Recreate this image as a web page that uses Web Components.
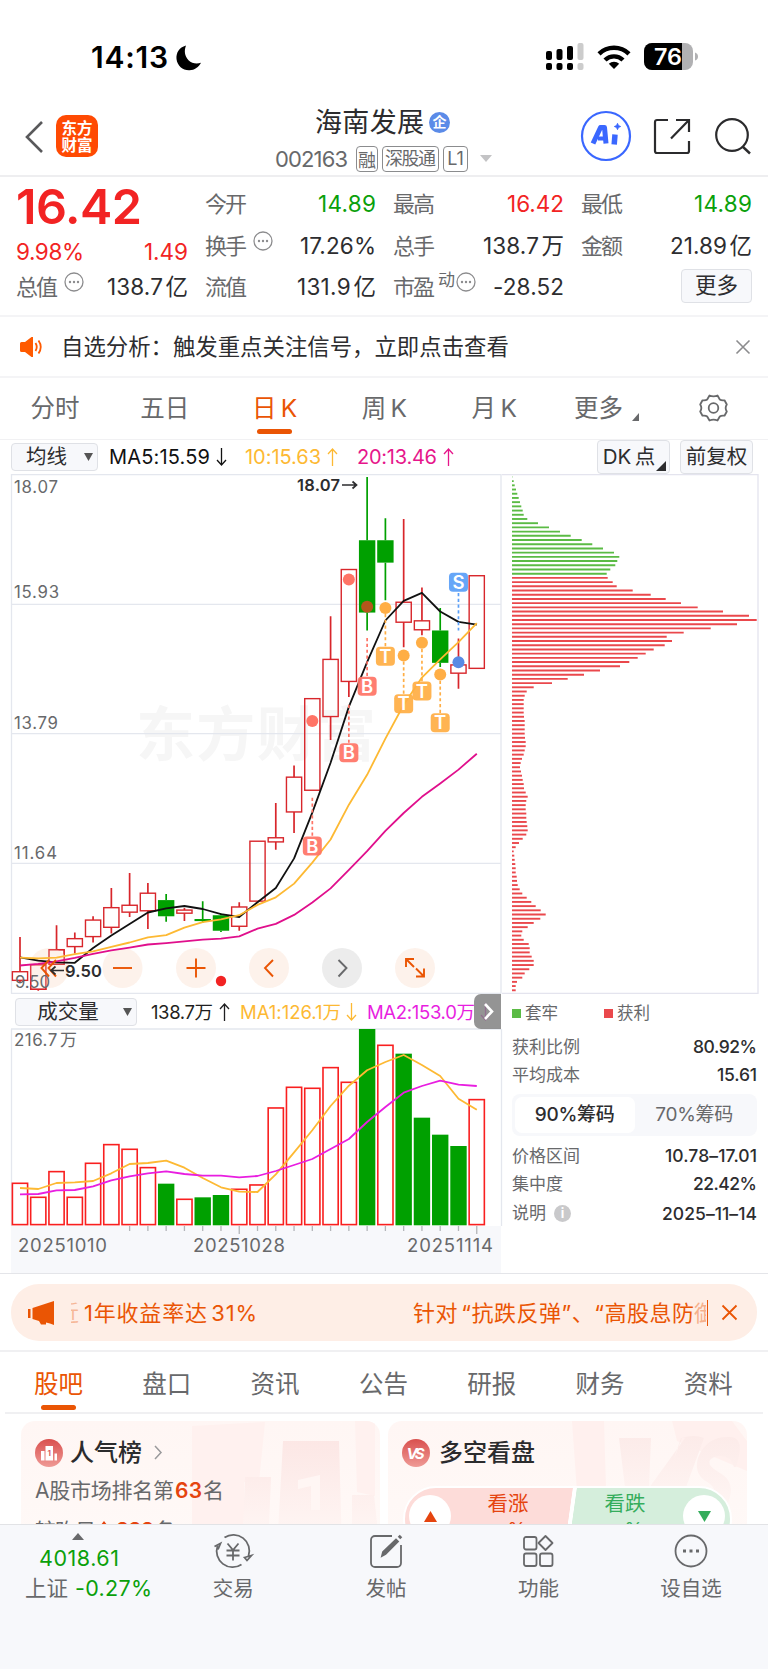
<!DOCTYPE html>
<html lang="zh-CN">
<head>
<meta charset="UTF-8">
<meta name="viewport" content="width=device-width, initial-scale=1.0">
<title>海南发展 002163</title>
<style>
    body {
        margin: 0;
        width: 768px;
        height: 1669px;
        overflow: hidden;
        background: #fff;
        color: #2d2d2f;
        font-family: Inter, "Noto Sans CJK SC", sans-serif;
        word-spacing: -2.500px;
        --orange: #ea5504;
        --red: #f22323;
        --green: #0aa00a;
        --gray: #68696b;
        --panel: #f7f8fb;
    }
    main {
        display: flex;
        flex-direction: column;
        height: 1669px;
    }
</style>
</head>
<body>
<main>
    <status-bar></status-bar>
    <stock-header></stock-header>
    <quote-board></quote-board>
    <notice-bar>自选分析：触发重点关注信号，立即点击查看</notice-bar>
    <period-tabs></period-tabs>
    <ma-toolbar></ma-toolbar>
    <chart-area></chart-area>
    <promo-banner></promo-banner>
    <section-tabs></section-tabs>
    <card-row></card-row>
    <bottom-bar></bottom-bar>
</main>

<script>
const define = (name, css, html) => {
    customElements.define(name, class extends HTMLElement {
        constructor() {
            super();
            this.attachShadow({mode: "open"});
        }

        connectedCallback() {
            this.shadowRoot.innerHTML = `<style>
                :host { display: block; box-sizing: border-box; flex: none; }
                * { box-sizing: border-box; }
                svg { display: block; flex: none; overflow: visible; }
                ${css}
            </style>${typeof html === "function" ? html(this) : html}`;
        }
    });
};

// one line of text, tracked so that it fills the width in "w"
class FitText extends HTMLElement {
    constructor() {
        super();
        this.attachShadow({mode: "open"});
    }

    connectedCallback() {
        this.shadowRoot.innerHTML = `
        <style>
            :host { display: inline-block; flex: none; white-space: nowrap; line-height: 1; }
            span { display: inline-block; }
        </style>
        <span><slot></slot></span>`;
        const width = Number(this.getAttribute("w"));
        const span = this.shadowRoot.querySelector("span");
        const count = this.textContent.length;
        if (width && count > 1) {
            const gap = (width - span.getBoundingClientRect().width) / (count - 1);
            span.style.letterSpacing = gap + "px";
            span.style.marginRight = -gap + "px";
        }
    }
}
customElements.define("fit-text", FitText);

define("more-dots", `
    :host { width: 20px; height: 20px; }
`, `<svg width="20" height="20" viewBox="0 0 20 20"><circle cx="10" cy="10" r="9" fill="none" stroke="#8c8c8e" stroke-width="1.300"/><g fill="#8c8c8e"><circle cx="6" cy="10" r="1.200"/><circle cx="10" cy="10" r="1.200"/><circle cx="14" cy="10" r="1.200"/></g></svg>`);

define("status-bar", `
    :host { display: flex; height: 100px; padding: 13px 70px 0 91px; align-items: center; color: #000; }
    .time { font-size: 30px; font-weight: 600; }
    .moon { margin: 2px auto 0 8px; }
    .signal { margin-right: 13px; }
    .battery { margin-left: 13px; }
`, `
    <fit-text class="time" w="77">14:13</fit-text>
    <svg class="moon" width="26" height="26" viewBox="0 0 26 26"><path d="M10 0.500C3 2.500 0 8 0.500 14c.8 7 6.500 11.500 13 11.200 5-.2 9.300-3 11.500-7.500-4 1.500-9 1-12.500-2.500C8.500 11 8 5.500 10 .5z"/></svg>
    <svg class="signal" width="38" height="27" viewBox="0 0 38 27"><g><rect x="0" y="8" width="6" height="9" rx="2"/><rect x="10.500" y="6" width="6" height="11" rx="2"/><rect x="21" y="3" width="6" height="14" rx="2"/><rect x="0" y="20" width="6" height="7" rx="2"/><rect x="10.500" y="20" width="6" height="7" rx="2"/><rect x="21" y="20" width="6" height="7" rx="2"/></g><g fill="#ccc"><rect x="31.500" y="0" width="6" height="17" rx="2"/><rect x="31.500" y="20" width="6" height="7" rx="2"/></g></svg>
    <svg width="34" height="24" viewBox="0 0 34 24"><g fill="none" stroke="#000" stroke-width="4.400"><path d="M2 8.800a21.500 21.500 0 0 1 30 0"/><path d="M8 15a13 13 0 0 1 18 0"/></g><path d="M17 24l-5.200-5.300a7.600 7.600 0 0 1 10.400 0z"/></svg>
    <svg class="battery" width="54" height="27" viewBox="0 0 54 27"><clipPath id="c"><rect width="49" height="27" rx="8"/></clipPath><g clip-path="url(#c)"><rect width="49" height="27" fill="#b1b1b3"/><rect width="38" height="27"/></g><path d="M51 9.500q3 1 3 4t-3 4z" fill="#b1b1b3"/><text x="10" y="22" fill="#fff" font-size="23" font-weight="600" textLength="28" lengthAdjust="spacingAndGlyphs">76</text></svg>
`);

define("stock-header", `
    :host { display: grid; grid-template-columns: 270px 1fr 190px; height: 77px; border-bottom: 2px solid #eeeef0; }
    .left, .right { display: flex; align-items: flex-start; }
    .left { padding: 15px 0 0 25px; }
    .left svg { margin-top: 6px; }
    .logo { margin-left: 13px; width: 42px; height: 42px; border-radius: 10px; background: #ff4a03; color: #fff; font: 700 15.500px/17px "Noto Sans CJK SC", sans-serif; text-align: center; padding-top: 4px; }
    .right { padding-left: 3px; padding-top: 11px; }
    .title { display: flex; align-items: center; height: 27px; margin: 9px 0 0 45px; font-size: 27px; color: #2b2b2d; }
    .qi { margin-left: 5px; margin-top: 0; width: 21px; height: 21px; border-radius: 50%; background: #5b8be8; color: #fff; font-size: 14px; font-weight: 700; line-height: 20px; text-align: center; }
    .code { display: flex; align-items: center; margin: 9px 0 0 5px; height: 27px; font-size: 22px; color: var(--gray); }
    .tag { height: 26px; border: 1.500px solid #8b8c8e; border-radius: 4px; margin-left: 4px; display: flex; align-items: center; justify-content: center; font-size: 18px; }
    .tag:nth-of-type(1) { margin-left: 8px; }
    .tri { margin-left: 12px; }
`, `
    <div class="left">
        <svg width="18" height="32" viewBox="0 0 18 32"><path d="M17 1L2 16l15 15" fill="none" stroke="#59595b" stroke-width="2.600"/></svg>
        <div class="logo">东方<br>财富</div>
    </div>
    <div>
        <div class="title"><fit-text w="109">海南发展</fit-text><span class="qi">企</span></div>
        <div class="code"><fit-text w="73">002163</fit-text>
            <div class="tag" style="width:22px">融</div><div class="tag" style="width:57px"><fit-text w="51">深股通</fit-text></div><div class="tag" style="width:25px">L1</div>
            <svg class="tri" width="12" height="7"><path d="M0 0h12l-6 7z" fill="#c3c3c5"/></svg>
        </div>
    </div>
    <div class="right">
        <svg width="50" height="50" viewBox="0 0 50 50"><circle cx="25" cy="25" r="24" fill="none" stroke="#3a67ff" stroke-width="2.200"/><g fill="#3a67ff" stroke="#3a67ff" stroke-linejoin="round"><path d="M12 32.500L19.500 16.500h4l1.500 16" fill="none" stroke-width="5"/><path d="M17 27.500h7" stroke-width="4"/><path d="M34 23.500l-.8 10" fill="none" stroke-width="5.500"/><path d="M36.500 12.300l1 2.200 2.200 1-2.200 1-1 2.200-1-2.200-2.200-1 2.200-1z" stroke-width=".8"/></g></svg>
        <svg style="margin:8px 0 0 23px" width="36" height="35" viewBox="0 0 36 35"><path d="M14 1H3a2 2 0 0 0-2 2v29a2 2 0 0 0 2 2h30a2 2 0 0 0 2-2V22M22 1h13v12M34.500 1.500L17 19.500" fill="none" stroke="#2b2b2d" stroke-width="2.200"/></svg>
        <svg style="margin:7px 0 0 25px" width="37" height="37" viewBox="0 0 37 37"><circle cx="17" cy="17" r="15.800" fill="none" stroke="#2b2b2d" stroke-width="2.200"/><path d="M27.500 28.500l7.500 7" stroke="#2b2b2d" stroke-width="2.400"/></svg>
    </div>
`);

define("quote-item", `
    :host { display: flex; align-items: center; height: 42px; font-size: 22.500px; line-height: 1; }
    .label { color: var(--gray); font-size: 22px; display: flex; }
    ::slotted(more-dots) { margin: -10px 0 0 6px; }
    .value { margin-left: auto; }
    :host([up]) .value { color: var(--red); }
    :host([down]) .value { color: var(--green); }
`, el => `
    <fit-text class="label" w="42">${el.getAttribute("label")}</fit-text>
    <slot></slot>
    <fit-text class="value" w="${el.getAttribute("w")}">${el.getAttribute("value")}</fit-text>
`);

define("quote-board", `
    :host { display: flex; gap: 17px; height: 140px; padding: 6px 16px 0 17px; border-bottom: 2px solid #f4f4f6; word-spacing: -4px; }
    .first { width: 171px; }
    .price { height: 48px; display: flex; align-items: center; color: var(--red); font-size: 48.500px; font-weight: 600; margin-left: -1px; }
    .change { height: 42px; display: flex; align-items: center; justify-content: space-between; color: var(--red); font-size: 22.500px; margin-left: -1px; }
    .first quote-item { height: 28px; margin-left: -1px; }
    .grid { display: grid; grid-template-columns: repeat(3, 171px); column-gap: 17px; grid-template-rows: 42px 42px 40px; }
    .low { height: 40px; }
    sup { font-size: 17px; line-height: 1; color: var(--gray); margin: -13px 0 0 3px; align-self: center; vertical-align: baseline; }
    button { justify-self: end; margin-top: 2px; width: 71px; height: 34px; border: 1.500px solid #dfe1e6; border-radius: 4px; background: var(--panel); font: inherit; font-size: 21.500px; line-height: 1; color: #2d2d2f; padding: 0; }
`, `
    <div class="first">
        <div class="price"><fit-text w="126">16.42</fit-text></div>
        <div class="change"><fit-text w="68">9.98%</fit-text><fit-text w="44">1.49</fit-text></div>
        <quote-item label="总值" value="138.7 亿" w="81"><more-dots></more-dots></quote-item>
    </div>
    <div class="grid">
        <quote-item label="今开" value="14.89" w="58" down></quote-item>
        <quote-item label="最高" value="16.42" w="57" up></quote-item>
        <quote-item label="最低" value="14.89" w="58" down></quote-item>
        <quote-item label="换手" value="17.26%" w="76"><more-dots></more-dots></quote-item>
        <quote-item label="总手" value="138.7 万" w="81"></quote-item>
        <quote-item label="金额" value="21.89 亿" w="82"></quote-item>
        <quote-item class="low" label="流值" value="131.9 亿" w="79"></quote-item>
        <quote-item class="low" label="市盈" value="-28.52" w="71"><sup>动</sup><more-dots style="margin-left:1px"></more-dots></quote-item>
        <button>更多</button>
    </div>
`);

define("notice-bar", `
    :host { display: flex; align-items: center; height: 61px; padding: 1px 18px 0 20px; border-bottom: 2px solid #f4f4f6; font-size: 22.400px; line-height: 1; }
    .text { margin: 0 auto 0 18px; }
`, `
    <svg width="23" height="20" viewBox="0 0 23 20"><path d="M0 6.500Q0 5 1.500 5H5l6.500-5H13v20h-1.500L5 15H1.500Q0 15 0 13.500z" fill="#ff5a00"/><path d="M15.500 6q2.500 4 0 8M18.500 3.500q4.500 6.500 0 13" fill="none" stroke="#ff5a00" stroke-width="1.800"/></svg>
    <div class="text"><slot></slot></div>
    <svg width="14" height="14" viewBox="0 0 14 14"><path d="M.5.5l13 13M13.500.5l-13 13" stroke="#8c8c8e" stroke-width="1.600"/></svg>
`);

define("tab-item", `
    :host { display: flex; flex-direction: column; align-items: center; width: 100px; font-size: 24.500px; line-height: 30px; color: var(--gray); }
    :host([active]) { color: var(--orange); }
    :host([active])::after { content: ""; width: 35px; height: 5px; border-radius: 3px; background: var(--orange); margin-top: 6px; }
    span { white-space: pre; }
`, `<span><slot></slot></span>`);

define("period-tabs", `
    :host { display: flex; align-items: flex-start; height: 62px; padding: 15px 0 0 5px; border-bottom: 1.500px solid #f1f1f3; }
    tab-item { margin-right: 9.800px; }
    .more { display: flex; align-items: flex-end; margin-left: 20px; width: 125px; color: var(--gray); font-size: 24.500px; line-height: 30px; }
    .more svg { margin: 0 0 2px 9px; }
    .gear { margin-top: 1px; }
`, `
    <tab-item>分时</tab-item><tab-item>五日</tab-item><tab-item active>日 K</tab-item><tab-item>周 K</tab-item><tab-item>月 K</tab-item>
    <div class="more">更多<svg width="7" height="8"><path d="M7 0v8H0z" fill="#68696b"/></svg></div>
    <svg class="gear" width="29" height="28" viewBox="0 0 29 28"><path d="M10.500 1.500q4 1.800 8 0l2.300 4q1.500 1.200 4.700.8l2.300 4.200q-2.300 3.500 0 7l-2.300 4.200q-3.200-.4-4.700.8l-2.300 4q-4-1.800-8 0l-2.300-4q-1.500-1.200-4.700-.8l-2.300-4.200q2.300-3.500 0-7l2.300-4.200q3.200.4 4.700-.8z" fill="none" stroke="#68696b" stroke-width="1.800" stroke-linejoin="round"/><circle cx="14.500" cy="14" r="4.800" fill="none" stroke="#68696b" stroke-width="1.800"/></svg>
`);

define("pick-button", `
    :host { display: flex; align-items: center; height: 28px; border: 1.500px solid #dfe1e6; border-radius: 4px; background: var(--panel); font-size: 20.500px; line-height: 1; color: #2d2d2f; }
    span { flex: 1; text-align: center; white-space: nowrap; }
    :host([drop]) span { padding-right: 3px; }
    svg { margin-right: 4px; }
`, el => `<span><slot></slot></span>${el.hasAttribute("drop") ? `<svg width="9" height="8"><path d="M0 0h9L4.500 8z" fill="#555"/></svg>` : ""}`);

define("arrow-mark", `
    :host { width: 11px; height: 18px; }
    :host([down]) { transform: rotate(180deg); }
`, `<svg width="11" height="18" viewBox="0 0 11 18"><path d="M5.500 18V1M1 6l4.500-5L10 6" fill="none" stroke="currentColor" stroke-width="1.300"/></svg>`);

define("ma-toolbar", `
    :host { display: flex; align-items: center; height: 34px; padding: 0 15px 0 11px; font-size: 20px; color: #111; }
    .dk { margin-left: auto; margin-right: 10px; position: relative; }
    .dk svg { position: absolute; right: 4px; bottom: 3px; }
`, `
    <pick-button drop style="width:87px">均线</pick-button>
    <fit-text style="margin-left:11px" w="101">MA5:15.59</fit-text><arrow-mark down style="margin-left:6px"></arrow-mark>
    <fit-text style="margin-left:18px;color:#fdb933" w="76">10:15.63</fit-text><arrow-mark style="margin-left:6px;color:#fdb933"></arrow-mark>
    <fit-text style="margin-left:19px;color:#e6168b" w="80">20:13.46</fit-text><arrow-mark style="margin-left:6px;color:#e6168b"></arrow-mark>
    <div class="dk"><pick-button style="width:73px;height:34px;padding-right:9px">DK 点</pick-button><svg width="10" height="10"><path d="M10 0v10H0z" fill="#2d2d2f"/></svg></div>
    <pick-button style="width:73px;height:34px">前复权</pick-button>
`);

// candle: [high, body top, body bottom, low, falling]
const candles = [
    [1356, 1457, 1482, 1490], [1430, 1437, 1508, 1512], [1322, 1393, 1435, 1436], [1343, 1361, 1384, 1404],
    [1296, 1307, 1355, 1372], [1214, 1271, 1328, 1346], [1170, 1264, 1284, 1298], [1199, 1229, 1280, 1333],
    [1231, 1249, 1296, 1312, 1], [1272, 1278, 1287, 1310], [1252, 1304, 1310, 1315, 1], [1288, 1293, 1338, 1342, 1],
    [1255, 1269, 1325, 1338], [1078, 1078, 1252, 1252], [967, 1068, 1080, 1103], [858, 892, 993, 1054],
    [664, 664, 930, 930], [425, 550, 716, 784], [289, 289, 614, 659], [20, 204, 414, 466, 1],
    [140, 204, 269, 378, 1], [142, 384, 442, 515], [341, 438, 464, 480], [401, 466, 560, 572, 1],
    [489, 566, 590, 635], [307, 307, 576, 576]
];
const ma5 = [1415, 1425, 1430, 1431, 1388, 1352, 1318, 1285, 1273, 1266, 1275, 1290, 1298, 1255, 1214, 1128, 995, 850, 687, 558, 437, 380, 357, 411, 441, 449];
const ma10 = [1416, 1418, 1416, 1406, 1398, 1385, 1372, 1357, 1351, 1329, 1313, 1305, 1293, 1263, 1241, 1201, 1140, 1073, 972, 885, 780, 682, 603, 550, 500, 445];
const ma20 = [1439, 1434, 1427, 1417, 1405, 1395, 1387, 1378, 1374, 1369, 1364, 1361, 1354, 1332, 1318, 1292, 1256, 1215, 1161, 1107, 1048, 996, 949, 910, 870, 824];

// signal: [candle, letter, badge, dot, line from, line to, colour, dot colour]
const signals = [
    [16, "B", 1092, 729, 952, 1065, "#ff7466"], [18, "B", 821, 318, 682, 793, "#ff7466"],
    [19, "B", 628, 397, 488, 600, "#ff7466", "#b5561c"], [20, "T", 541, 401, 418, 513, "#ffae45"],
    [21, "T", 679, 539, 556, 650, "#ffae45"], [22, "T", 642, 502, 520, 614, "#ffae45"],
    [23, "T", 734, 594, 612, 706, "#ffae45"], [24, "S", 326, 558, 357, 466, "#5a9ff8", "#588be4"]
];

// volume: [top, falling]
const volumes = [[578], [620], [543], [620], [518], [462], [476], [531], [580, 1], [626], [621, 1], [614, 1], [596], [583], [352], [290], [293], [231], [275], [116, 1], [164], [190, 1], [382, 1], [433, 1], [467, 1], [327]];
const vma1 = [593, 596, 578, 576, 572, 549, 521, 518, 511, 532, 563, 591, 604, 605, 552, 486, 420, 347, 286, 240, 215, 194, 224, 257, 325, 358];
const vma2 = [612, 611, 600, 599, 588, 570, 558, 549, 543, 551, 556, 556, 561, 557, 542, 524, 506, 476, 446, 395, 350, 307, 287, 271, 283, 287];

const chips = [37, 41, 44, 48, 52, 56, 60, 64, 68, 71, 82, 114, 147, 180, 212, 245, 277, 309, 342, 358, 352, 346, 331, 320,
    323, 338, 350, 398, 452, 497, 543, 593, 669, 747, 770, 711, 632, 551, 500, 516, 494, 461, 437, 413, 388, 360, 300, 252, 203, 156,
    101, 80, 74, 71, 71, 71, 71, 72, 74, 74, 74, 74, 75, 77, 77, 74, 71, 66, 62, 60, 63, 66, 68, 71, 72, 77, 83, 79, 77, 77, 79, 79, 80, 82, 83, 79,
    68, 57, 47, 41, 43, 44, 46, 47, 47, 50, 51, 53, 59, 67, 80, 94, 107, 122, 137, 121, 101, 83, 67, 64, 71, 86, 89, 89, 95, 101, 101, 88, 74, 67, 51, 47, 47];

const cx = i => 9 + 18.27 * i;
const py = v => v / 2.904 - 4;
const vy = v => (v - 116) / 3;
const line = (values, y, color) =>
    `<polyline fill="none" stroke="${color}" stroke-width="1.800" stroke-linejoin="round" points="${values.map((v, i) => cx(i).toFixed(1) + "," + y(v).toFixed(1)).join(" ")}"/>`;

const drawCandles = () => candles.map(([high, top, bottom, low, down], i) => {
    const x = cx(i);
    const color = down ? "#00a000" : "#d8262b";
    const wicks = `<path d="M${x} ${py(high)}V${py(top)}M${x} ${py(bottom)}V${py(low)}" stroke="${color}" stroke-width="1.700"/>`;
    const body = down
        ? `<rect x="${x - 8.200}" y="${py(top)}" width="16.400" height="${py(bottom) - py(top)}" fill="${color}"/>`
        : `<rect x="${x - 7.600}" y="${py(top)}" width="15.200" height="${py(bottom) - py(top)}" fill="none" stroke="${color}" stroke-width="1.400"/>`;
    return wicks + body;
}).join("");

const drawSignals = () => signals.map(([i, letter, badge, dot, from, to, color, dotColor]) => {
    const x = cx(i);
    return `<path d="M${x} ${py(from)}V${py(to)}" stroke="${color}" stroke-width="1.700" stroke-dasharray="3.200 2.600"/>
        <circle cx="${x}" cy="${py(dot)}" r="6" fill="${dotColor || color}"/>
        <rect x="${x - 9.500}" y="${py(badge) - 9.500}" width="19" height="19" rx="4" fill="${color}" fill-opacity=".93"/>
        <text x="${x}" y="${py(badge) + 6.500}" text-anchor="middle" font-size="18.500" font-weight="600" fill="#fff">${letter}</text>`;
}).join("");

define("price-chart", `
    :host { width: 491px; height: 520px; }
    text.axis { fill: #68696b; font-size: 16.800px; }
    text.mark { fill: #2d2d2f; font-size: 16.500px; font-weight: 600; }
    .watermark { font-family: "Noto Sans CJK SC"; font-weight: 700; font-size: 59px; fill: #f6f6f6; }
`, () => `
    <svg width="491" height="520" viewBox="0 0 491 520">
        <text class="watermark" x="125" y="282" textLength="240">东方财富</text>
        <g stroke="#e4e7ee" stroke-width="1.300"><path d="M0 130.300H490M0 259.700H490M0 389.300H490"/><path d="M0 .7H490M.5 0V519.500M490 0V519.500M0 519.300H490"/></g>
        <text class="axis" x="3" y="19" textLength="44">18.07</text>
        <text class="axis" x="3" y="124" textLength="45">15.93</text>
        <text class="axis" x="3" y="254.500" textLength="44">13.79</text>
        <text class="axis" x="3" y="384.500" textLength="43">11.64</text>
        ${drawCandles()}
        <g fill="#fdf1e9" fill-opacity=".93"><circle cx="38" cy="494" r="20"/><circle cx="111.500" cy="494" r="20"/><circle cx="185" cy="494" r="20"/><circle cx="258" cy="494" r="20"/><circle cx="404" cy="494" r="20"/></g>
        <circle cx="331" cy="494" r="20" fill="#ececec"/>
        <g fill="none" stroke="#d8262b" stroke-width="1.400" opacity=".85"><rect x="19.700" y="490.800" width="15.200" height="24.500"/><path d="M45.500 475.700h7.700v14.500H38v-14.500z"/></g>
        <text class="axis" x="4" y="513.500" textLength="35">9.50</text>
        ${line(ma5, py, "#111")}${line(ma10, py, "#fdb933")}${line(ma20, py, "#e00f8c")}
        <g fill="none" stroke="#ea5504" stroke-width="1.900">
            <path d="M38 486l-7.500 8 7.500 8.500M45 486l-7.500 8 7.500 8.500"/>
            <path d="M102 494h19"/><path d="M175.500 494h19M185 484.500v19"/>
            <path d="M262 486l-8 8 8 8.500"/>
            <path d="M395 493v-8h8M395 485l8 8M405 502.500h8v-8M413 502.500l-8-8"/>
            <path d="M327.500 486l8 8-8 8.500" stroke="#68696b"/>
        </g>
        <circle cx="210" cy="507" r="5.200" fill="#f22323"/>
        <text class="mark" x="54" y="502.500" textLength="37">9.50</text>
        <path d="M53 496.500H40M44.500 492.500l-4.500 4 4.500 4" fill="none" stroke="#2d2d2f" stroke-width="1.700"/>
        <text class="mark" x="286" y="17" textLength="43">18.07</text>
        <path d="M331 11h14M341.500 7.500l4 3.500-4 3.500" fill="none" stroke="#2d2d2f" stroke-width="1.700"/>
        ${drawSignals()}
    </svg>
`);

define("volume-chart", `
    :host { width: 491px; height: 244px; background: linear-gradient(var(--panel), var(--panel)) 0 197px / 490px 100% no-repeat; }
    text { fill: #68696b; font-size: 18.500px; }
    text.axis { font-size: 17px; word-spacing: -3px; }
`, () => `
    <svg width="491" height="244" viewBox="0 0 491 244">
        <path d="M0 0H490M.5 0V197M490.500 0V197" stroke="#e4e7ee" stroke-width="1.300"/>
        <text class="axis" x="3" y="17" textLength="63">216.7 万</text>
        <path d="M${volumes.map((v, i) => i > 5 ? cx(i) + " 197v" + (i === 12 || i === 25 ? 8 : 5) : "").filter(Boolean).join("M")}" stroke="#b3b5b9" stroke-width="1.300"/>
        ${volumes.map(([top, down], i) => down
            ? `<rect x="${cx(i) - 8.200}" y="${vy(top)}" width="16.400" height="${196.300 - vy(top)}" fill="#00a000"/>`
            : `<rect x="${cx(i) - 7.600}" y="${vy(top) + .3}" width="15.200" height="${195.300 - vy(top)}" fill="none" stroke="#f91f1f" stroke-width="1.600"/>`).join("")}
        ${line(vma1, vy, "#fdb933")}${line(vma2, vy, "#e81ee0")}
        <text x="7" y="223" textLength="89">20251010</text>
        <text x="182" y="223" textLength="92">20251028</text>
        <text x="396" y="223" textLength="86">20251114</text>
    </svg>
`);

define("volume-toolbar", `
    :host { display: flex; align-items: center; position: relative; width: 490px; height: 35px; padding: 1px 0 0 4px; font-size: 18.500px; color: #1f1f21; }
    .next { position: absolute; right: 0; top: 0; width: 27px; height: 35px; border-radius: 7px 0 0 7px; background: rgba(128, 128, 128, .84); }
`, `
    <pick-button drop style="width:122px">成交量</pick-button>
    <fit-text style="margin-left:14px" w="62">138.7万</fit-text><arrow-mark style="margin-left:6px"></arrow-mark>
    <fit-text style="margin-left:10px;color:#fdb933" w="101">MA1:126.1万</fit-text><arrow-mark down style="margin-left:5px;color:#fdb933"></arrow-mark>
    <fit-text style="margin-left:10px;color:#e81ee0" w="108">MA2:153.0万</fit-text><arrow-mark down style="margin-left:5px;color:#e81ee0"></arrow-mark>
    <div class="next"><svg width="27" height="35"><path d="M11 10l7 7.500-7 7.500" fill="none" stroke="#fff" stroke-width="2.600"/></svg></div>
`);

define("chip-chart", `
    :host { width: 257px; height: 520px; }
`, () => `
    <svg width="257" height="520" viewBox="0 0 257 520">
        <path d="M0 .7H256V519.300H0" fill="none" stroke="#e4e4ee" stroke-width="1.300"/>
        ${chips.map((v, i) => `<path d="M10 ${(2.900 + i * 4.208).toFixed(2)}h${((v - 36) / 3).toFixed(1)}" stroke="${i < 24 ? "#5bbb45" : "#ea484c"}" stroke-width="1.900"/>`).join("")}
    </svg>
`);

define("chip-line", `
    :host { display: flex; justify-content: space-between; align-items: center; height: 28px; font-size: 17.500px; line-height: 1; font-weight: 500; }
    .label { display: flex; align-items: center; gap: 8px; font-weight: 400; color: var(--gray); font-size: 17px; }
`, el => `
    <div class="label">${el.getAttribute("label")}<slot></slot></div>
    <fit-text w="${el.getAttribute("w")}">${el.getAttribute("value")}</fit-text>
`);

define("chip-panel", `
    :host { width: 245px; margin-left: 10px; padding-top: 6px; }
    .legend { display: flex; height: 26px; align-items: center; font-size: 16.500px; line-height: 1; color: var(--gray); }
    .legend i { width: 9px; height: 9px; margin-right: 4px; background: #5bbb45; }
    .legend i:last-of-type { margin-left: 46px; background: #ea484c; }
    .seg { display: flex; height: 42px; margin: 5px 0 6px; padding: 3px; border-radius: 8px; background: var(--panel); font-size: 19px; line-height: 35px; text-align: center; color: var(--gray); }
    .seg div { flex: 1; border-radius: 7px; }
    .seg .on { background: #fff; color: #2d2d2f; font-weight: 500; }
    .info { width: 17px; height: 17px; border-radius: 50%; background: #c9c9cb; color: #fff; font-size: 13px; font-weight: 700; line-height: 17px; text-align: center; }
`, `
    <div class="legend"><i></i>套牢<i></i>获利</div>
    <chip-line style="margin-top:7px" label="获利比例" value="80.92%" w="64"></chip-line>
    <chip-line label="平均成本" value="15.61" w="40"></chip-line>
    <div class="seg"><div class="on"><fit-text w="80">90%筹码</fit-text></div><div><fit-text w="78">70%筹码</fit-text></div></div>
    <chip-line label="价格区间" value="10.78–17.01" w="92"></chip-line>
    <chip-line label="集中度" value="22.42%" w="64"></chip-line>
    <chip-line style="height:31px" label="说明" value="2025–11–14" w="95"><span class="info">i</span></chip-line>
`);

define("chart-area", `
    :host { display: grid; grid-template-columns: 491px 257px; height: 800px; padding-left: 11px; border-bottom: 1.500px solid #e4e5e9; align-content: start; }
`, `
    <price-chart></price-chart>
    <chip-chart></chip-chart>
    <div><volume-toolbar></volume-toolbar><volume-chart></volume-chart></div>
    <chip-panel></chip-panel>
`);

define("promo-banner", `
    :host { padding: 10px 11px 10px; height: 78px; border-bottom: 2px solid #f0f0f2; }
    .pill { display: flex; align-items: center; height: 57px; border-radius: 28px; background: #feeee6; color: var(--orange); padding: 0 20px 0 17px; font-size: 22px; line-height: 1; word-spacing: -3.500px; }
    .roll { display: flex; align-items: center; height: 26px; width: 637px; margin-left: 16px; border-right: 1.500px solid var(--orange); overflow: hidden; }
    .ghost { width: 8px; direction: rtl; overflow: hidden; opacity: .35; margin-right: 5px; }
    .fade { width: 12px; overflow: hidden; opacity: .4; }
    .close { margin-left: auto; }
`, `
    <div class="pill">
        <svg width="27" height="24" viewBox="0 0 27 24"><path d="M0 8h2.500v9H0zM4.500 7L26 0v24l-4-1.500-4-1v2h-5l-2-3.500-6.500-2z" fill="#ea5504"/></svg>
        <div class="roll">
            <span class="ghost">近</span><fit-text w="173">1年收益率达 31%</fit-text>
            <fit-text style="margin-left:156px" w="281">针对 “抗跌反弹”、“高股息防</fit-text><span class="fade">御</span>
        </div>
        <svg class="close" width="15" height="15" viewBox="0 0 15 15"><path d="M.5.5l14 14M14.500.5l-14 14" stroke="#ea5504" stroke-width="1.800"/></svg>
    </div>
`);

define("section-tabs", `
    :host { display: flex; height: 62px; margin: 0 5px; padding: 17px 0 0 3.500px; border-bottom: 2px solid #f0f0f2; }
    tab-item { margin-right: 8.300px; }
`, ["股吧", "盘口", "资讯", "公告", "研报", "财务", "资料"].map((t, i) => `<tab-item${i ? "" : " active"}>${t}</tab-item>`).join(""));

define("info-card", `
    :host { height: 160px; border-radius: 14px; background: linear-gradient(180deg, #fff6f4, #fffaf8); overflow: hidden; position: relative; }
    .head { display: flex; align-items: center; gap: 8px; padding: 17px 0 0 14px; height: 46px; font-size: 24px; line-height: 1; font-weight: 600; color: #2b2b2d; }
    .head, .body { position: relative; }
    .art { position: absolute; inset: 0; }
`, `
    <div class="art"><slot name="art"></slot></div>
    <div class="head"><slot name="icon"></slot><slot name="title"></slot></div>
    <div class="body"><slot></slot></div>
`);

define("card-row", `
    :host { display: flex; gap: 8px; height: 110px; padding: 7px 0 0 21px; overflow: hidden; }
    info-card { width: 359px; }
    .name { font-weight: 500; margin-left: -1px; }
    .line { display: flex; align-items: center; padding-left: 14px; height: 24px; margin-top: 11px; font-size: 21px; line-height: 1; color: var(--gray); }
    b { color: #e5440f; font-weight: 600; }
    .line + .line { margin-top: 16px; }
    .split { display: flex; margin: 19px 0 0 15px; width: 329px; height: 66px; padding: 3px; border: 2px solid #fff; border-radius: 33px; background: linear-gradient(98deg, #fddcd9 50.200%, #fff 50.400%, #fff 51.400%, #d5eedc 51.600%); }
    .ball { width: 42px; height: 42px; border-radius: 50%; background: #fff; display: flex; align-items: center; justify-content: center; margin: 4px 2px 0 1px; }
    .side { width: 52px; font-size: 20.500px; line-height: 24px; text-align: center; color: #e5440f; margin: 1px 0 0; }
    .side.fall { color: #35ad5c; }
    .side small { display: block; font-size: 19px; line-height: 24px; margin-top: 2px; }
    svg text { font-family: Inter, sans-serif; }
`, `
    <info-card>
        <svg slot="art" width="359" height="160"><defs><linearGradient id="g" x2="0" y2="1"><stop offset="0" stop-color="#fce7e5"/><stop offset="1" stop-color="#fff8f6"/></linearGradient></defs><path d="M171 5l73-4-6 60-15 0v62l-52 8zM334 0l20 0v75l-18-4z" fill="#fff1ef"/><path d="M262 20h56l3 110h-65zM224 56h26l-3 74h-26zM331 74h22l6 56h-28z" fill="url(#g)"/><path d="M277 59l22-5v35h-9V65l-13 3z" fill="#fff6f4"/></svg>
        <svg slot="icon" width="28" height="28" viewBox="0 0 28 28"><defs><linearGradient id="r" x2="0" y2="1"><stop offset="0" stop-color="#d9504e"/><stop offset="1" stop-color="#ef9a96"/></linearGradient></defs><circle cx="14" cy="14" r="14" fill="url(#r)"/><path d="M6 12h3.500v9.500H6zM10.500 7h7.500v14.500h-7.500zM19.500 14.500H22v7h-2.500z" fill="#fff"/><text x="14.300" y="16.500" font-size="8" font-weight="700" text-anchor="middle" fill="#d9605c">1</text></svg>
        <span slot="title" style="display:flex;align-items:center;gap:12px"><fit-text class="name" w="72">人气榜</fit-text><svg width="8" height="13" viewBox="0 0 8 13"><path d="M1 0l6 6.500L1 13" fill="none" stroke="#9a9a9c" stroke-width="1.500"/></svg></span>
        <div class="line"><fit-text w="139">A股市场排名第</fit-text><b><fit-text w="27" style="margin:0 1px">63</fit-text></b>名</div>
        <div class="line"><fit-text w="61">较昨日</fit-text><svg style="margin:0 5px 0 1px" width="14" height="18"><path d="M7 0l7 9h-4v9H4V9H0z" fill="#e5440f"/></svg><b><fit-text w="38">232</fit-text></b>名</div>
    </info-card>
    <info-card>
        <svg slot="art" width="359" height="160"><defs><linearGradient id="v" x2="0" y2="1"><stop offset="0" stop-color="#fcebe9"/><stop offset="1" stop-color="#fff7f5"/></linearGradient></defs><path d="M184 0h32l3 100h-28zM284 0h60l15 20v30l-70-30z" fill="#fff0ee"/><path d="M231 17h32l-2 50 36-50h-4l-28 82h-24zM262 99l32-82q12-4 22 0l-30 82zM346 46q-3-12-15-11-12 2-9 9 3 4 10 8 14 8 10 24-6 20-30 22l-12-4 8-20q14 6 18-4 1-5-10-11-10-8-6-22 8-22 32-21 16 0 6 30z" fill="url(#v)"/></svg>
        <svg slot="icon" width="28" height="28" viewBox="0 0 28 28"><circle cx="14" cy="14" r="14" fill="url(#r)"/><text x="13.500" y="19.500" font-size="15" font-weight="700" font-style="italic" text-anchor="middle" fill="#fff" textLength="18">VS</text></svg>
        <fit-text class="name" slot="title" w="96" style="margin-left:1px">多空看盘</fit-text>
        <div class="split">
            <div class="ball"><svg width="13" height="11"><path d="M6.500 0L13 11H0z" fill="#e5440f"/></svg></div>
            <div class="side" style="margin-left:29px">看涨<small>--%</small></div>
            <div class="side fall" style="margin-left:65px">看跌<small>--%</small></div>
            <div class="ball" style="margin-left:auto"><svg width="13" height="11"><path d="M6.500 11L13 0H0z" fill="#35ad5c"/></svg></div>
        </div>
    </info-card>
`);

define("nav-item", `
    :host { display: flex; flex-direction: column; align-items: center; width: 152.600px; padding-top: 9px; font-size: 20.500px; line-height: 24px; color: var(--gray); }
    .label { margin-top: 8.500px; }
    ::slotted(svg) { display: block; fill: none; stroke: #68696b; stroke-width: 1.800; overflow: visible; }
`, `<slot name="icon"></slot><div class="label"><slot></slot></div>`);

define("bottom-bar", `
    :host { display: flex; height: 145px; background: var(--panel); border-top: 1.500px solid #e2e3e6; position: relative; }
    .index { width: 157px; padding: 8px 4px 0 25px; color: var(--green); font-size: 21.500px; line-height: 1; }
    .index svg { margin-left: 47px; }
    .index div { display: flex; }
    .gray { color: var(--gray); }
`, `
    <div class="index">
        <svg width="12" height="7"><path d="M6 0l6 7H0z" fill="#68696b"/></svg>
        <div style="margin:8px 0 0 14px"><fit-text w="80">4018.61</fit-text></div>
        <div style="margin-top:8.500px"><fit-text class="gray" w="43">上证</fit-text><fit-text style="margin-left:7px" w="77">-0.27%</fit-text></div>
    </div>
    <nav-item><svg slot="icon" width="38" height="34" viewBox="0 0 38 34"><path d="M10.500 3.500A16 16 0 0 1 34.500 22M30.500 23.500l7-2-4.500 5z M27.500 30.500A16 16 0 0 1 3.500 12M.5 12.500l6-3-2.500 6"/><path d="M13.500 9.500l5.500 6.500 5.500-6.500M12.500 16.500h13M12.500 21.500h13M19 16v10.500"/></svg>交易</nav-item>
    <nav-item><svg slot="icon" width="32" height="34" viewBox="0 0 32 34"><path d="M22 2H5a4 4 0 0 0-4 4v23a4 4 0 0 0 4 4h22a4 4 0 0 0 4-4V11"/><path d="M12 22l1-4L26 5.500l2 2L15.500 20z" fill="#68696b"/><path d="M29 4l2-2" stroke-width="3.500"/></svg>发帖</nav-item>
    <nav-item><svg slot="icon" width="30" height="34" viewBox="0 0 30 34"><rect x="1" y="3" width="12.500" height="12.500" rx="2"/><rect x="1" y="19.500" width="12.500" height="12.500" rx="2"/><rect x="17" y="19.500" width="12.500" height="12.500" rx="2"/><path d="M22.500 2l7 7-7 7-7-7z" stroke-linejoin="round"/></svg>功能</nav-item>
    <nav-item><svg slot="icon" width="34" height="34" viewBox="0 0 34 34"><circle cx="17" cy="17" r="15.500"/><path d="M9 17h3M15.500 17h3M22 17h3" stroke-width="3"/></svg>设自选</nav-item>
`);
</script>
</body>
</html>
